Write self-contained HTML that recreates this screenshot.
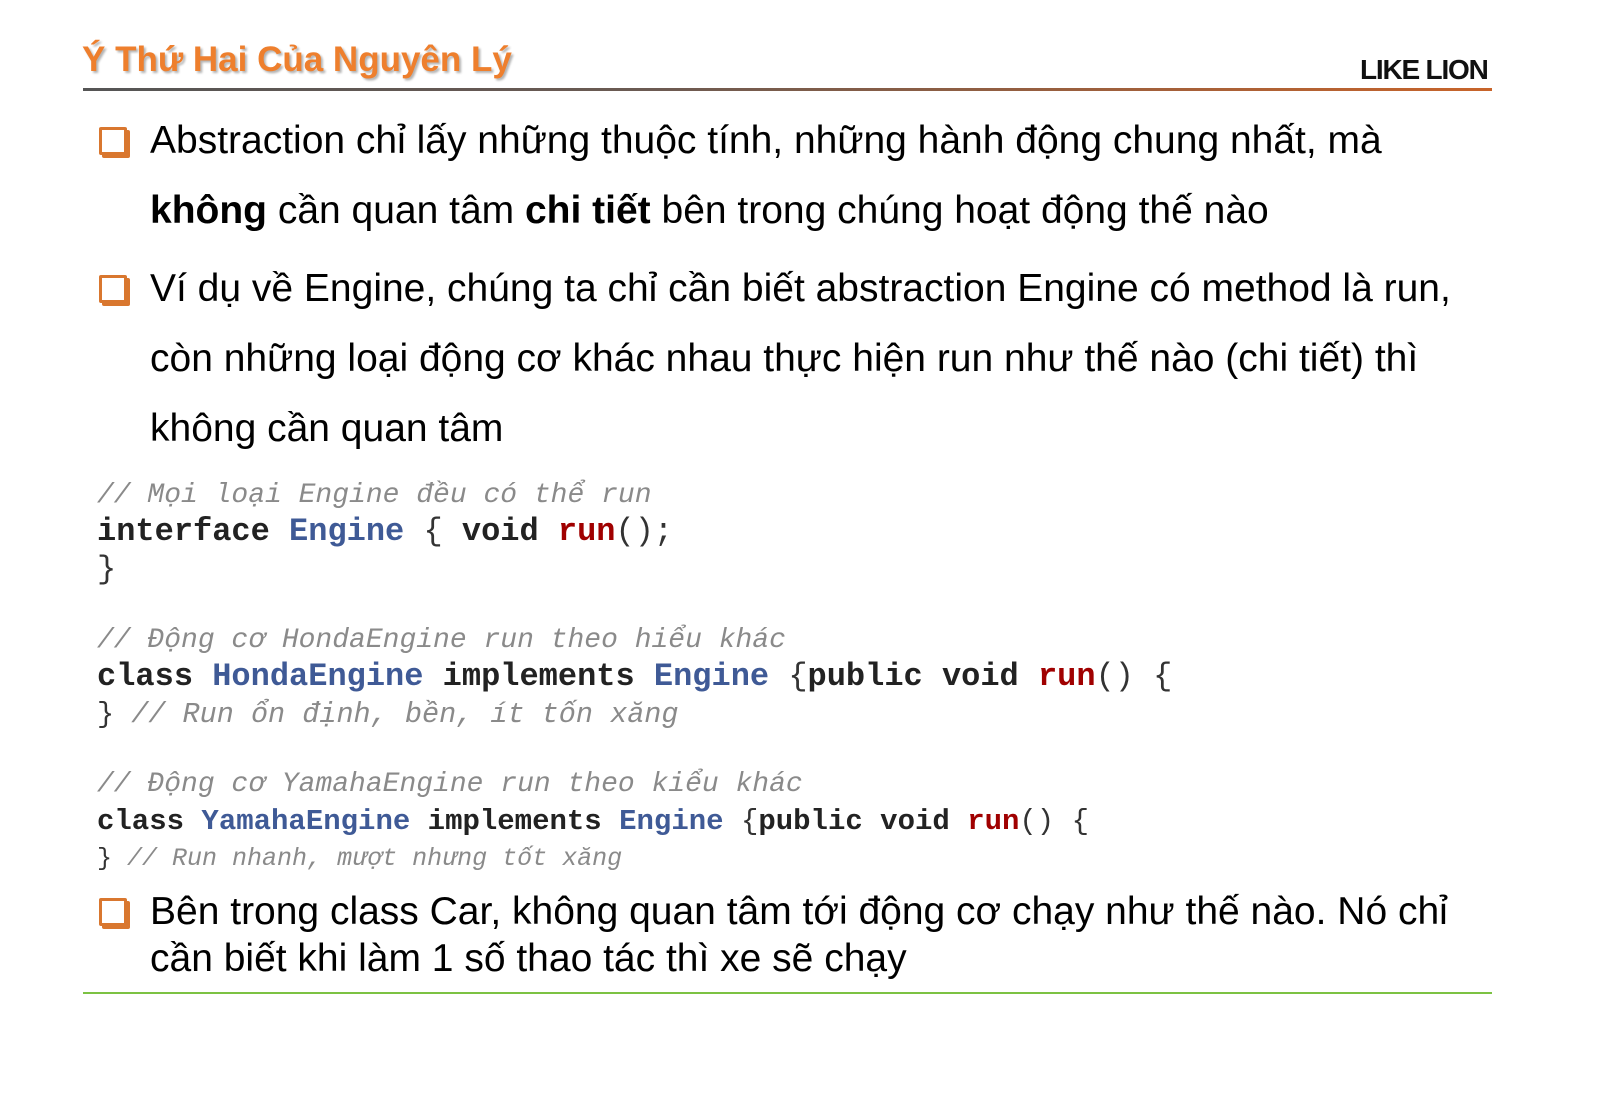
<!DOCTYPE html>
<html><head><meta charset="utf-8"><style>
body{margin:0;width:1600px;height:1108px;background:#fff;position:relative;overflow:hidden;font-family:"Liberation Sans",Arial,sans-serif}
.a{position:absolute;white-space:nowrap;line-height:1}
.t{font-size:39px;color:#000}
.m{font-family:"Liberation Mono","Courier New",monospace}
.c{color:#8a8a8a;font-style:italic}
.k{font-weight:bold;color:#222}
.b{font-weight:bold;color:#3f5a96}
.r{font-weight:bold;color:#a00000}
.p{color:#333}
.sq{position:absolute;width:22px;height:22px;border:3px solid #d9772f;box-shadow:3px 3px 0 #d9772f;background:#fff;border-radius:2px}
</style></head><body>
<div class="a" style="left:82px;top:42px;font-size:35px;font-weight:bold;color:#ee7f2d;text-shadow:2px 2px 2px rgba(0,0,0,0.3)">Ý Thứ Hai Của Nguyên Lý</div>
<div class="a" style="left:1360px;top:56px;font-size:28px;font-weight:bold;color:#111;letter-spacing:-1.2px">LIKE LION</div>
<div style="position:absolute;left:83px;top:88px;width:1409px;height:3px;background:linear-gradient(90deg,#555 0%,#6b5a52 40%,#c8642a 100%)"></div>

<div class="sq" style="left:99px;top:127px"></div>
<div class="a t" style="left:150px;top:121px">Abstraction chỉ lấy những thuộc tính, những hành động chung nhất, mà</div>
<div class="a t" style="left:150px;top:191px"><b>không</b> cần quan tâm <b>chi tiết</b> bên trong chúng hoạt động thế nào</div>
<div class="sq" style="left:99px;top:275px"></div>
<div class="a t" style="left:150px;top:269px">Ví dụ về Engine, chúng ta chỉ cần biết abstraction Engine có method là run,</div>
<div class="a t" style="left:150px;top:339px">còn những loại động cơ khác nhau thực hiện run như thế nào (chi tiết) thì</div>
<div class="a t" style="left:150px;top:409px">không cần quan tâm</div>

<div class="a m c" style="left:97px;top:482px;font-size:28px">// Mọi loại Engine đều có thể run</div>
<div class="a m" style="left:97px;top:516px;font-size:32px"><span class="k">interface</span> <span class="b">Engine</span> <span class="p">{</span> <span class="k">void</span> <span class="r">run</span><span class="p">();</span></div>
<div class="a m p" style="left:97px;top:554px;font-size:32px">}</div>

<div class="a m c" style="left:97px;top:627px;font-size:28px">// Động cơ HondaEngine run theo hiểu khác</div>
<div class="a m" style="left:97px;top:661px;font-size:32px"><span class="k">class</span> <span class="b">HondaEngine</span> <span class="k">implements</span> <span class="b">Engine</span> <span class="p">{</span><span class="k">public void</span> <span class="r">run</span><span class="p">() {</span></div>
<div class="a m" style="left:97px;top:701px;font-size:28.5px"><span class="p">}</span> <span class="c">// Run ổn định, bền, ít tốn xăng</span></div>

<div class="a m c" style="left:97px;top:771px;font-size:28px">// Động cơ YamahaEngine run theo kiểu khác</div>
<div class="a m" style="left:97px;top:807px;font-size:29px"><span class="k">class</span> <span class="b">YamahaEngine</span> <span class="k">implements</span> <span class="b">Engine</span> <span class="p">{</span><span class="k">public void</span> <span class="r">run</span><span class="p">() {</span></div>
<div class="a m" style="left:97px;top:846px;font-size:25px"><span class="p">}</span> <span class="c">// Run nhanh, mượt nhưng tốt xăng</span></div>

<div class="sq" style="left:99px;top:898px"></div>
<div class="a t" style="left:150px;top:892px">Bên trong class Car, không quan tâm tới động cơ chạy như thế nào. Nó chỉ</div>
<div class="a t" style="left:150px;top:939px">cần biết khi làm 1 số thao tác thì xe sẽ chạy</div>
<div style="position:absolute;left:83px;top:992px;width:1409px;height:2px;background:#7cc243"></div>
</body></html>
